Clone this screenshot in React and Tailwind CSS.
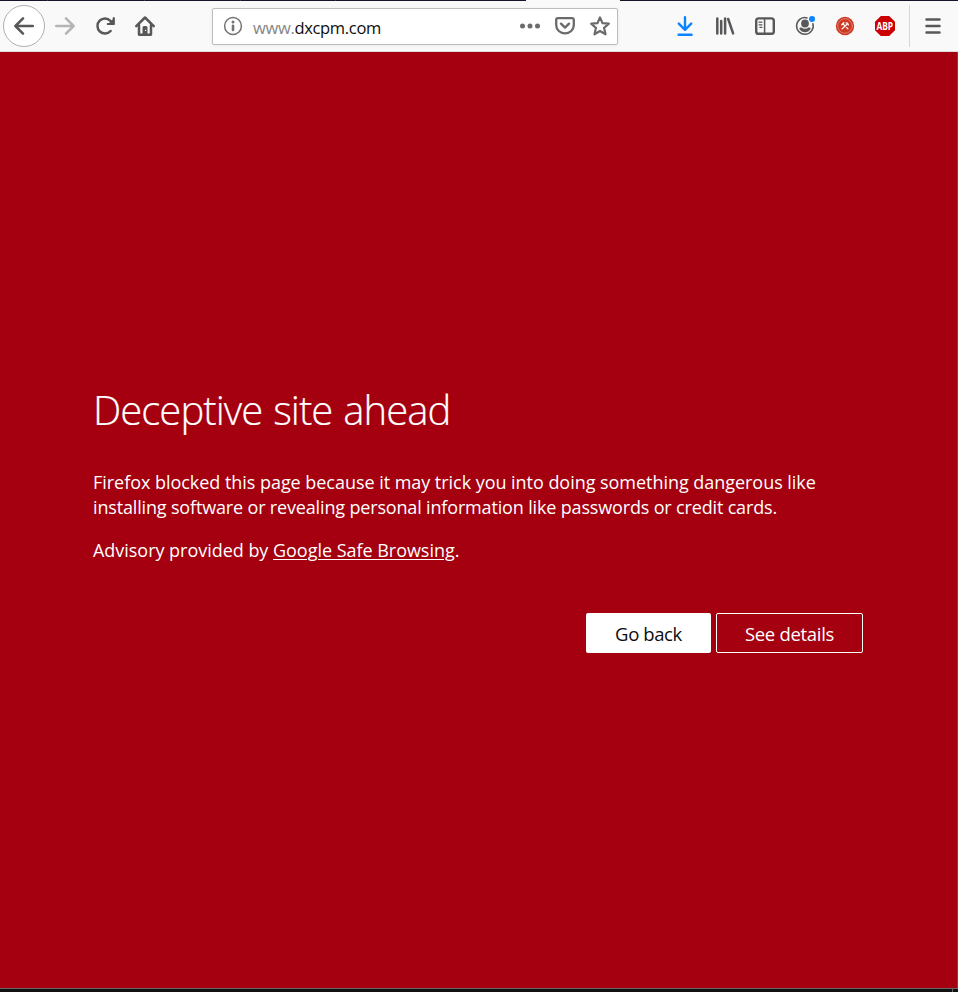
import React from 'react';

function Icon({ children, className = 'text-[#58585a]', width = 2.3 }) {
  return (
    <svg
      viewBox="0 0 20 20"
      className={`block h-5 w-5 shrink-0 ${className}`}
      fill="none"
      stroke="currentColor"
      strokeWidth={width}
      strokeLinecap="round"
      strokeLinejoin="round"
    >
      {children}
    </svg>
  );
}

function ToolButton({ children, label }) {
  return (
    <button aria-label={label} className="flex h-10 w-10 shrink-0 items-center justify-center">
      {children}
    </button>
  );
}

function TabStrip() {
  return (
    <div className="flex h-px w-full shrink-0 bg-[#14142b]">
      <div className="w-12 border-r border-[#3c3c50]" />
      <div className="w-[97px] border-r border-[#3c3c50]" />
      <div className="w-[96px] border-r border-[#3c3c50]" />
      <div className="w-[95px] border-r border-[#3c3c50]" />
      <div className="ml-[190px] w-[94px] bg-[#f9f9fa]" />
    </div>
  );
}

function UrlBar() {
  return (
    <div className="ml-[47px] flex h-[37px] w-[406px] shrink-0 items-center rounded-[2px] border border-[#bcbcbc] bg-white pl-[10px] pr-[7px] shadow-[0_1px_4px_rgba(0,0,0,0.06)]">
      <Icon className="text-[#737373]" width={1.5}>
        <circle cx="10" cy="10" r="8.4" />
        <path d="M10 9.8v4.2" strokeWidth="2.6" />
        <circle cx="10" cy="6" r="1.5" fill="currentColor" stroke="none" />
      </Icon>
      <div className="ml-[10px] grow whitespace-pre pt-[3px] font-['Open_Sans','Noto_Sans',sans-serif] text-[16.5px] leading-[24px] tracking-[-0.32px] text-[#0c0c0d]">
        <span className="text-[#858585]">www.</span>dxcpm.com
      </div>
      <div className="flex items-center gap-[15px]">
        <Icon className="text-[#6b6b6d]">
          <g fill="currentColor" stroke="none">
            <circle cx="2.5" cy="10" r="2.5" />
            <circle cx="10" cy="10" r="2.5" />
            <circle cx="17.5" cy="10" r="2.5" />
          </g>
        </Icon>
        <Icon className="text-[#6b6b6d]" width={2.3}>
          <path d="M2.8 2.2h14.4a1.6 1.6 0 0 1 1.6 1.6v5.3a8.8 8.3 0 0 1-17.6 0V3.8a1.6 1.6 0 0 1 1.6-1.6z" />
          <path d="M6 7.7l4 3.9 4-3.9" strokeWidth="2.4" />
        </Icon>
        <Icon className="text-[#6b6b6d]" width={2.2}>
          <path d="M10 1.4l2.5 5.7 6.3.6-4.7 4.2 1.4 6.4L10 15l-5.5 3.3 1.4-6.4L1.2 7.7l6.3-.6z" />
        </Icon>
      </div>
    </div>
  );
}

function Toolbar() {
  return (
    <div className="flex h-[51px] w-full shrink-0 items-center border-b border-[#dedee0] bg-[#f9f9fa] pl-[3px]">
      <button aria-label="Back" className="flex h-[42px] w-[42px] shrink-0 items-center justify-center rounded-full border border-[#b0b0b0] bg-white">
        <Icon width={2.5}>
          <path d="M18.8 10H1.8M9 2.4L1.4 10 9 17.6" />
        </Icon>
      </button>
      <ToolButton label="Forward">
        <Icon className="text-[#b5b5b6]" width={2.5}>
          <path d="M1.2 10h17M11 2.4l7.6 7.6-7.6 7.6" />
        </Icon>
      </ToolButton>
      <ToolButton label="Reload">
        <Icon width={2.5}>
          <path d="M15.6 15A7.5 7.5 0 1 1 15.4 4.8L17.6 7" />
          <path d="M18.7 2v6h-6" strokeWidth="2" />
          <path d="M19.6 1.6v7.2h-7.2z" fill="currentColor" stroke="none" />
        </Icon>
      </ToolButton>
      <ToolButton label="Home">
        <Icon width={2.5}>
          <path d="M1.3 10.2L10 1.5l8.7 8.7" />
          <path d="M4 9v9.2c0 .3.3.6.6.6h10.8c.3 0 .6-.3.6-.6V9" />
          <path d="M7.5 18v-6.4a1.6 1.6 0 0 1 1.6-1.6h1.8a1.6 1.6 0 0 1 1.6 1.6V18z" fill="currentColor" stroke="none" />
          <circle cx="10.6" cy="14.4" r=".6" fill="#f9f9fa" stroke="none" />
        </Icon>
      </ToolButton>
      <UrlBar />
      <div className="ml-[47px] flex items-center">
        <ToolButton label="Downloads">
          <Icon className="text-[#0a84ff]" width={2.4}>
            <path d="M10 1.2v12M3.8 7.6l6.2 6.2 6.2-6.2M3.6 18.8h13" />
          </Icon>
        </ToolButton>
        <ToolButton label="Library">
          <Icon width={2.5}>
            <path d="M2.3 2.4v15.2M6.2 4.9v12.7M10.1 2.4v15.2M13.2 3l4.9 14.4" />
          </Icon>
        </ToolButton>
        <ToolButton label="Sidebars">
          <Icon width={2.4}>
            <rect x="1.2" y="2.4" width="17.6" height="15.4" rx="2.4" />
            <path d="M9.6 2.4v15.4" strokeWidth="1.5" />
            <path d="M4 6.2h3M4 8.8h3M4.9 11.4h2.1" strokeWidth="1.2" />
          </Icon>
        </ToolButton>
        <ToolButton label="Account">
          <Icon width={1.5}>
            <path d="M17.9 7.7A8.3 8.3 0 1 1 12 1.9" />
            <circle cx="10" cy="7.5" r="3.9" fill="currentColor" stroke="none" />
            <path d="M4.2 12.6c.3-.9 1.4-1.4 2.4-1 .9.8 2.1 1.2 3.4 1.2s2.5-.4 3.4-1.2c1-.4 2.1.1 2.4 1a6.4 6.4 0 0 1-11.6 0z" fill="currentColor" stroke="none" />
            <circle cx="17" cy="3" r="3" fill="#0a84ff" stroke="none" />
          </Icon>
        </ToolButton>
        <ToolButton label="Tools">
          <Icon className="text-white" width={1.1}>
            <circle cx="10" cy="10" r="9.2" fill="#cc3a26" stroke="none" />
            <circle cx="10" cy="10" r="7.3" stroke="#e58b7a" strokeWidth=".8" />
            <path d="M8 7.8l5 5M12.2 8l-5.2 5" />
            <path d="M6.8 8.8l2-2M11.2 6.9c1.1 0 1.9.8 2.1 1.9" strokeWidth="1.4" />
          </Icon>
        </ToolButton>
        <ToolButton label="Adblock Plus">
          <span className="flex h-5 w-5 items-center justify-center bg-[#cc0000] [clip-path:polygon(29%_0,71%_0,100%_29%,100%_71%,71%_100%,29%_100%,0_71%,0_29%)]">
            <span className="scale-x-[0.84] scale-y-110 font-['Open_Sans',sans-serif] text-[10px] font-bold leading-5 tracking-[-0.2px] text-white">ABP</span>
          </span>
        </ToolButton>
      </div>
      <div className="ml-1 h-[42px] w-px bg-[#d7d7db]" />
      <div className="ml-[3px]">
        <ToolButton label="Menu">
          <Icon width={2.5}>
            <path d="M3.5 3.6h13M3.5 10h13M3.5 16.4h13" />
          </Icon>
        </ToolButton>
      </div>
    </div>
  );
}

function BlockedPage() {
  return (
    <main className="w-full grow border-r border-[#6b4a50] bg-[#a4000f] pl-[93px] pr-[94px] pt-[331px] font-['Open_Sans','Noto_Sans',sans-serif] text-white">
      <h1 className="whitespace-nowrap text-[40px] font-light leading-[54px] tracking-[-0.95px] [word-spacing:1.5px] [-webkit-text-stroke:0.2px_white]">
        Deceptive site ahead
      </h1>
      <div className="mt-[33px] whitespace-nowrap text-[18px] leading-[25px]">
        <p className="tracking-[-0.04px]">Firefox blocked this page because it may trick you into doing something dangerous like</p>
        <p className="tracking-[-0.16px]">installing software or revealing personal information like passwords or credit cards.</p>
        <p className="mt-[18px] tracking-[-0.03px]">
          Advisory provided by{' '}
          <a className="underline decoration-1 underline-offset-2">Google Safe Browsing</a>.
        </p>
      </div>
      <div className="mt-[50px] flex justify-end gap-[5px] text-[18.5px] leading-[25px]">
        <button className="h-10 w-[125px] rounded-[2px] bg-white tracking-[-0.4px] text-[#0c0c0d]">Go back</button>
        <button className="h-10 w-[147px] rounded-[2px] border border-white tracking-[-0.3px]">See details</button>
      </div>
    </main>
  );
}

export default function App() {
  return (
    <div className="flex h-[992px] w-[958px] flex-col overflow-hidden">
      <TabStrip />
      <Toolbar />
      <BlockedPage />
      <div className="flex h-1 shrink-0 justify-end border-t border-[#666] bg-[#111]">
        <div className="mr-[5px] w-px bg-[#666]" />
      </div>
    </div>
  );
}
